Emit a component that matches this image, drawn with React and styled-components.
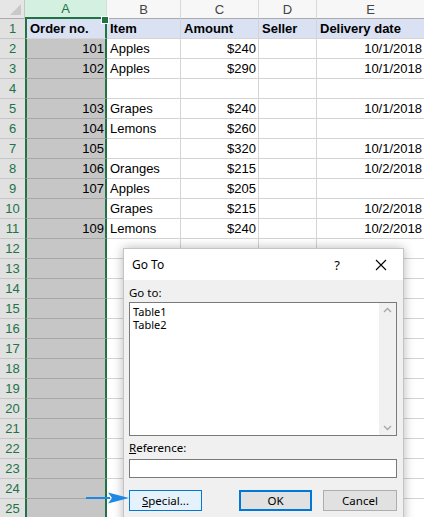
import React from "react";
import styled, { createGlobalStyle } from "styled-components";

const GlobalStyle = createGlobalStyle`
  html, body {
    margin: 0;
    padding: 0;
    background: #ffffff;
    overflow: hidden;
  }
  * {
    box-sizing: border-box;
  }
`;

const GREEN = "#217346";

const Page = styled.div`
  position: relative;
  width: 424px;
  height: 517px;
  overflow: hidden;
  font-family: "Liberation Sans", Arial, sans-serif;
`;

const Sheet = styled.div`
  display: grid;
  grid-template-columns: 25px 82px 74px 78px 58px 108px;
  grid-template-rows: 19px repeat(25, 20px);
`;

const Corner = styled.div`
  position: relative;
  background: #e6e6e6;
  border-right: 1px solid #c6c6c6;
  border-bottom: 1px solid #ababab;

  &::after {
    content: "";
    position: absolute;
    right: 3px;
    bottom: 3px;
    border-left: 11px solid transparent;
    border-bottom: 11px solid #c9c9c9;
  }
`;

const ColHead = styled.div`
  display: flex;
  align-items: center;
  justify-content: center;
  font-size: 13px;
  color: ${(p) => (p.$active ? GREEN : "#444444")};
  background: ${(p) => (p.$active ? "#d3f0e0" : "#f7f7f7")};
  border-right: 1px solid #d9d9d9;
  border-bottom: 1px solid ${(p) => (p.$active ? GREEN : "#ababab")};
  border-bottom-width: ${(p) => (p.$active ? "2px" : "1px")};
`;

const RowHead = styled.div`
  display: flex;
  align-items: center;
  justify-content: center;
  font-size: 13px;
  color: ${GREEN};
  background: #e1e1e1;
  border-bottom: 1px solid #c6c6c6;
`;

const Cell = styled.div`
  position: relative;
  display: flex;
  align-items: center;
  justify-content: ${(p) => (p.$right ? "flex-end" : "flex-start")};
  padding: 0 2px 0 3px;
  font-size: 13px;
  font-weight: ${(p) => (p.$bold ? 700 : 400)};
  color: #000;
  white-space: nowrap;
  background: ${(p) => (p.$bold ? "#d9e1f2" : p.$shaded ? "#c6c6c6" : "#ffffff")};
  border-right: 1px solid #d4d4d4;
  border-bottom: 1px solid ${(p) => (p.$shaded ? "#a6a6a6" : "#d4d4d4")};

  ${(p) =>
    p.$sel &&
    `
    border-left: 2px solid ${GREEN};
    border-right: 2px solid ${GREEN};
    padding-right: 1px;
  `}

  ${(p) =>
    p.$handle &&
    `
    &::after {
      content: "";
      position: absolute;
      right: -4px;
      top: -3px;
      width: 6px;
      height: 6px;
      background: ${GREEN};
      border: 1px solid #fff;
      z-index: 2;
    }
  `}
`;

const Dialog = styled.div`
  position: absolute;
  left: 123px;
  top: 248px;
  width: 281px;
  height: 290px;
  background: #f0f0f0;
  border: 1px solid #c4c4c4;
  box-shadow: 0 0 10px rgba(0, 0, 0, 0.28);
  font-family: "Segoe UI", "Noto Sans", "Liberation Sans", sans-serif;
  font-size: 11.5px;
  color: #000;
  display: flex;
  flex-direction: column;
`;

const TitleBar = styled.div`
  height: 31px;
  background: #ffffff;
  display: flex;
  align-items: center;
  padding-left: 8px;
  font-size: 12px;
`;

const Title = styled.div`
  flex: 1;
`;

const TitleButton = styled.div`
  width: 44px;
  height: 31px;
  display: flex;
  align-items: center;
  justify-content: center;
  font-size: 13px;
`;

const Body = styled.div`
  padding: 5px 6px 0 5px;
  display: flex;
  flex-direction: column;
`;

const Label = styled.div`
  height: 16px;
  line-height: 16px;
  margin-bottom: 1px;
`;

const ListBox = styled.div`
  height: 134px;
  background: #fff;
  border: 1px solid #7a7a7a;
  display: flex;
`;

const ListItems = styled.div`
  flex: 1;
  padding: 2px 3px;
  font-size: 11px;
  line-height: 13px;
`;

const ScrollBar = styled.div`
  width: 17px;
  background: #f0f0f0;
  display: flex;
  flex-direction: column;
  justify-content: space-between;
  align-items: center;
  padding: 4px 0;
`;

const Reference = styled(Label)`
  margin-top: 4px;
  margin-bottom: 3px;
`;

const Input = styled.div`
  height: 19px;
  background: #fff;
  border: 1px solid #7a7a7a;
`;

const Buttons = styled.div`
  margin-top: 12px;
  display: flex;
  align-items: center;
`;

const Button = styled.div`
  width: ${(p) => p.$w || 73}px;
  height: 21px;
  display: flex;
  align-items: center;
  justify-content: center;
  background: ${(p) => (p.$hover ? "#e5f1fb" : "#e1e1e1")};
  border: ${(p) => (p.$default ? 2 : 1)}px solid
    ${(p) => (p.$hover || p.$default ? "#0078d7" : "#adadad")};
  margin-left: ${(p) => p.$gap || 0}px;
`;

const Arrow = styled.svg`
  position: absolute;
  left: 86px;
  top: 492px;
`;

const cols = ["A", "B", "C", "D", "E"];

const rows = [
  ["Order no.", "Item", "Amount", "Seller", "Delivery date"],
  ["101", "Apples", "$240", "", "10/1/2018"],
  ["102", "Apples", "$290", "", "10/1/2018"],
  ["", "", "", "", ""],
  ["103", "Grapes", "$240", "", "10/1/2018"],
  ["104", "Lemons", "$260", "", ""],
  ["105", "", "$320", "", "10/1/2018"],
  ["106", "Oranges", "$215", "", "10/2/2018"],
  ["107", "Apples", "$205", "", ""],
  ["", "Grapes", "$215", "", "10/2/2018"],
  ["109", "Lemons", "$240", "", "10/2/2018"],
];

const rightCols = [true, false, true, false, true];

function Chevron({ up }) {
  return (
    <svg width="9" height="6" viewBox="0 0 9 6">
      <path
        d={up ? "M1 5 L4.5 1.5 L8 5" : "M1 1 L4.5 4.5 L8 1"}
        fill="none"
        stroke="#a6a6a6"
        strokeWidth="1.3"
      />
    </svg>
  );
}

export default function App() {
  const allRows = Array.from({ length: 25 }, (_, i) => rows[i] || ["", "", "", "", ""]);

  return (
    <Page>
      <GlobalStyle />
      <Sheet>
        <Corner />
        {cols.map((c, i) => (
          <ColHead key={"h" + i} $active={c === "A"}>
            {c}
          </ColHead>
        ))}
        {allRows.map((r, ri) => (
          <React.Fragment key={ri}>
            <RowHead>{ri + 1}</RowHead>
            {r.map((v, ci) => (
              <Cell
                key={ci}
                $right={rightCols[ci] && ri > 0}
                $bold={ri === 0}
                $shaded={ci === 0 && ri > 0}
                $sel={ci === 0}
                $handle={ci === 0 && ri === 0}
              >
                {v}
              </Cell>
            ))}
          </React.Fragment>
        ))}
      </Sheet>

      <Dialog>
        <TitleBar>
          <Title>Go To</Title>
          <TitleButton>?</TitleButton>
          <TitleButton>
            <svg width="12" height="12" viewBox="0 0 12 12">
              <path d="M1 1 L11 11 M11 1 L1 11" stroke="#000" strokeWidth="1.1" />
            </svg>
          </TitleButton>
        </TitleBar>
        <Body>
          <Label>Go to:</Label>
          <ListBox>
            <ListItems>
              <div>Table1</div>
              <div>Table2</div>
            </ListItems>
            <ScrollBar>
              <Chevron up />
              <Chevron />
            </ScrollBar>
          </ListBox>
          <Reference>
            <u>R</u>eference:
          </Reference>
          <Input />
          <Buttons>
            <Button $hover>
              <span>
                <u>S</u>pecial...
              </span>
            </Button>
            <Button $default $gap={37}>
              OK
            </Button>
            <Button $gap={11} $w={74}>
              Cancel
            </Button>
          </Buttons>
        </Body>
      </Dialog>

      <Arrow width="44" height="12" viewBox="0 0 44 12">
        <line x1="0" y1="6" x2="24" y2="6" stroke="#1e88e5" strokeWidth="2" />
        <path d="M22 0.5 L43 6 L22 11.5 L26 6 Z" fill="#1e88e5" />
      </Arrow>
    </Page>
  );
}
